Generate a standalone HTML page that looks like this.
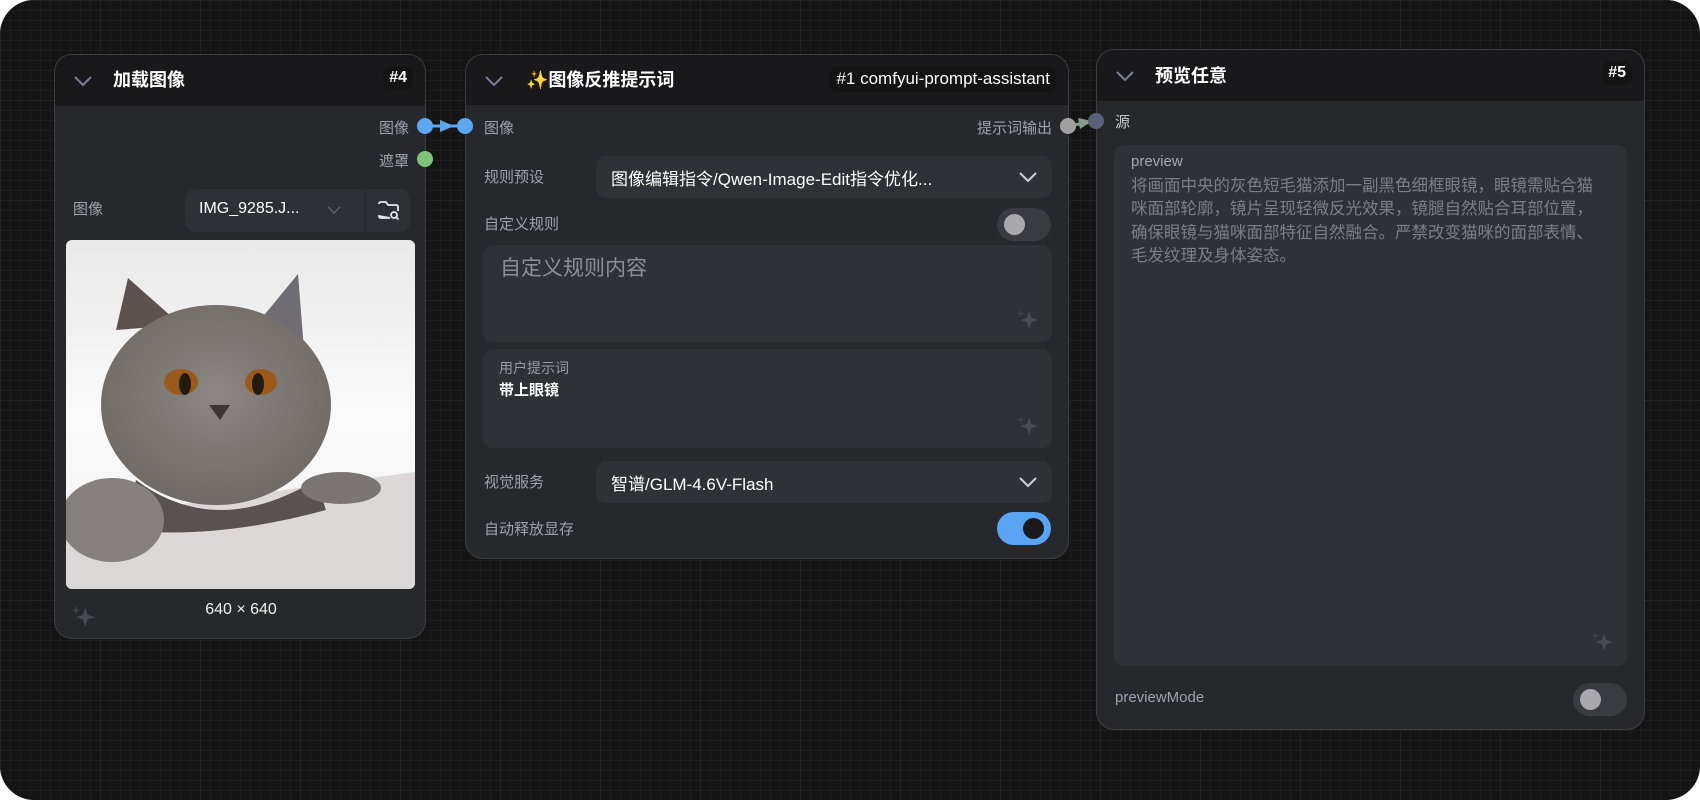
<!DOCTYPE html>
<html><head><meta charset="utf-8"><style>
*{box-sizing:border-box;margin:0;padding:0}
body{width:1700px;height:800px;background:#fff;overflow:hidden;font-family:"Liberation Sans","Noto Sans CJK SC",sans-serif;position:relative}
.canvas{position:absolute;left:0;top:0;width:1700px;height:800px;border-radius:34px;background-color:#141414;
background-image:linear-gradient(#1d1d1d 1px,transparent 1px),linear-gradient(90deg,#1d1d1d 1px,transparent 1px);background-size:10px 10px}
.canvas:after{content:"";position:absolute;inset:0;border-radius:34px;background-image:linear-gradient(#222 1px,transparent 1px),linear-gradient(90deg,#222 1px,transparent 1px);background-size:100px 100px}
.node{position:absolute;background:#27282c;border:1px solid #3c3d42;border-radius:18px;overflow:hidden;z-index:2}
.hd{position:absolute;left:0;top:0;right:0;background:#19191b;color:#fff;font-weight:bold;font-size:18px}
.hd .t{position:absolute;top:11px}
.hd .id{position:absolute;right:12px;top:11px;background:#141415;border-radius:8px;padding:3px 6px;font-size:16px}
.chev{position:absolute;left:18px;top:20px}
.a{position:absolute;white-space:nowrap}
.lbl{color:#9fa1ad;font-size:15px}
.dot{position:absolute;width:16px;height:16px;border-radius:50%;z-index:5}
.box{position:absolute;background:#303136;border-radius:10px}
.tog{position:absolute;width:54px;height:33px;border-radius:17px;background:#3a3b40}
.tog i{position:absolute;width:21px;height:21px;border-radius:50%;top:6px;left:7px;background:#a9a9ad}
.tog.on{background:#5aa5f3}.tog.on i{left:auto;right:7px;background:#1a1a1c}
</style></head><body>
<div class="canvas"></div>

<svg style="position:absolute;left:0;top:0;z-index:4" width="1700" height="800">
<line x1="425" y1="126" x2="465" y2="126" stroke="#5ba8f0" stroke-width="3"/>
<polygon points="440,120 454,126 440,132" fill="#5ba8f0"/>
<line x1="1068" y1="126" x2="1096" y2="121" stroke="#8a9a88" stroke-width="3"/>
<polygon points="1078,118 1092,121 1080,129" fill="#8a9a88"/>
</svg>

<!-- Node 1 -->
<div class="node" style="left:54px;top:54px;width:372px;height:585px">
 <div class="hd" style="height:51px">
  <svg class="chev" width="20" height="12"><path d="M2 2 L10 10 L18 2" stroke="#7a7f96" stroke-width="2" fill="none"/></svg>
  <div class="t" style="left:58px">加载图像</div>
  <div class="id">#4</div>
 </div>
 <div class="a lbl" style="right:16px;top:62px">图像</div>
 <div class="a lbl" style="right:16px;top:95px">遮罩</div>
 <div class="a lbl" style="left:18px;top:143px">图像</div>
 <div class="box" style="left:130px;top:134px;width:225px;height:43px;background:#2f3035">
  <div class="a" style="left:14px;top:11px;color:#fff;font-size:16px">IMG_9285.J...</div>
  <svg class="a" style="left:142px;top:17px" width="14" height="9"><path d="M1 1 L7 7 L13 1" stroke="#5f6068" stroke-width="1.5" fill="none"/></svg>
  <div class="a" style="left:180px;top:0;width:1px;height:43px;background:#26272b"></div>
  <svg class="a" style="left:192px;top:11px" width="24" height="22" viewBox="0 0 24 22"><path d="M2 4 Q2 2 4 2 H9 L11 5 H19 Q21 5 21 7 V11 M13 18 H4 Q2 18 2 16 Z" stroke="#e8e8ea" stroke-width="1.8" fill="none"/><circle cx="17" cy="15" r="3" stroke="#e8e8ea" stroke-width="1.8" fill="none"/><path d="M19 17 L21.5 19.5" stroke="#e8e8ea" stroke-width="1.8"/></svg>
 </div>
 <svg class="a" style="left:11px;top:185px;border-radius:6px" width="349" height="349" viewBox="0 0 349 349">
  <defs><linearGradient id="bg" x1="0" y1="0" x2="0" y2="1"><stop offset="0" stop-color="#e8e8e8"/><stop offset="0.5" stop-color="#fafafa"/><stop offset="1" stop-color="#f2f2f2"/></linearGradient>
  <radialGradient id="fur" cx="0.5" cy="0.45" r="0.6"><stop offset="0" stop-color="#8c8784"/><stop offset="1" stop-color="#6e6864"/></radialGradient></defs>
  <rect width="349" height="349" fill="url(#bg)"/>
  <polygon points="0,280 349,232 349,349 0,349" fill="#dcd8d8"/>
  <path d="M50 90 L62 38 L115 85 Z" fill="#5e5250"/>
  <path d="M190 85 L232 34 L238 110 Z" fill="#6f6c74"/>
  <ellipse cx="150" cy="165" rx="115" ry="100" fill="url(#fur)"/>
  <path d="M70 240 Q150 300 250 240 L260 270 Q150 300 60 290 Z" fill="#5a5250"/>
  <ellipse cx="46" cy="280" rx="52" ry="42" fill="#85807d"/>
  <ellipse cx="275" cy="248" rx="40" ry="16" fill="#7b7673"/>
  <ellipse cx="115" cy="142" rx="17" ry="13" fill="#9a5a18"/><ellipse cx="119" cy="144" rx="6" ry="11" fill="#241a14"/>
  <ellipse cx="195" cy="142" rx="16" ry="13" fill="#9a5a18"/><ellipse cx="192" cy="144" rx="6" ry="11" fill="#241a14"/>
  <path d="M143 165 L164 165 L154 180 Z" fill="#3e3433"/>
 </svg>
 <svg class="a" style="left:14px;top:547px" width="28" height="28" viewBox="0 0 24 24"><path d="M14 5 L16 11 L22 13 L16 15 L14 21 L12 15 L6 13 L12 11 Z" fill="#4a4b50"/><path d="M6 3 L7 6 L10 7 L7 8 L6 11 L5 8 L2 7 L5 6 Z" fill="#3e3f44"/></svg>
 <div class="a" style="left:0;width:372px;text-align:center;top:546px;color:#f0f0f0;font-size:16px">640 × 640</div>
</div>
<div class="dot" style="left:417px;top:118px;background:#5ba8f0"></div>
<div class="dot" style="left:417px;top:151px;background:#7cc47c"></div>

<!-- Node 2 -->
<div class="node" style="left:465px;top:54px;width:604px;height:505px">
 <div class="hd" style="height:50px">
  <svg class="chev" width="20" height="12"><path d="M2 2 L10 10 L18 2" stroke="#7a7f96" stroke-width="2" fill="none"/></svg>
  <div class="t" style="left:60px">✨图像反推提示词</div>
  <div class="id" style="font-weight:normal;font-size:17px">#1 comfyui-prompt-assistant</div>
 </div>
 <div class="a lbl" style="left:18px;top:62px">图像</div>
 <div class="a lbl" style="right:16px;top:62px">提示词输出</div>
 <div class="a lbl" style="left:18px;top:111px">规则预设</div>
 <div class="box" style="left:130px;top:101px;width:456px;height:42px">
  <div class="a" style="left:15px;top:9px;color:#fff;font-size:17px">图像编辑指令/Qwen-Image-Edit指令优化...</div>
  <svg class="a" style="right:14px;top:15px" width="20" height="12"><path d="M2 2 L10 10 L18 2" stroke="#d0d0d4" stroke-width="2" fill="none"/></svg>
 </div>
 <div class="a lbl" style="left:18px;top:158px">自定义规则</div>
 <div class="tog" style="left:531px;top:153px"><i></i></div>
 <div class="box" style="left:17px;top:190px;width:569px;height:97px">
  <div class="a" style="left:17px;top:7px;color:#8d8e94;font-size:21px">自定义规则内容</div>
  <svg class="a" style="right:12px;bottom:10px" width="26" height="26" viewBox="0 0 24 24"><path d="M14 5 L16 11 L22 13 L16 15 L14 21 L12 15 L6 13 L12 11 Z" fill="#4a4b50"/><path d="M6 3 L7 6 L10 7 L7 8 L6 11 L5 8 L2 7 L5 6 Z" fill="#3e3f44"/></svg>
 </div>
 <div class="box" style="left:17px;top:294px;width:569px;height:99px">
  <div class="a" style="left:16px;top:9px;color:#9a9ba3;font-size:14px">用户提示词</div>
  <div class="a" style="left:16px;top:30px;color:#fff;font-size:15px;font-weight:bold">带上眼镜</div>
  <svg class="a" style="right:12px;bottom:10px" width="26" height="26" viewBox="0 0 24 24"><path d="M14 5 L16 11 L22 13 L16 15 L14 21 L12 15 L6 13 L12 11 Z" fill="#4a4b50"/><path d="M6 3 L7 6 L10 7 L7 8 L6 11 L5 8 L2 7 L5 6 Z" fill="#3e3f44"/></svg>
 </div>
 <div class="a lbl" style="left:18px;top:416px">视觉服务</div>
 <div class="box" style="left:130px;top:406px;width:456px;height:42px">
  <div class="a" style="left:15px;top:9px;color:#fff;font-size:17px">智谱/GLM-4.6V-Flash</div>
  <svg class="a" style="right:14px;top:15px" width="20" height="12"><path d="M2 2 L10 10 L18 2" stroke="#d0d0d4" stroke-width="2" fill="none"/></svg>
 </div>
 <div class="a lbl" style="left:18px;top:463px">自动释放显存</div>
 <div class="tog on" style="left:531px;top:457px"><i></i></div>
</div>
<div class="dot" style="left:457px;top:118px;background:#5ba8f0"></div>
<div class="dot" style="left:1060px;top:118px;background:#a0a0a0"></div>

<!-- Node 3 -->
<div class="node" style="left:1096px;top:49px;width:549px;height:681px">
 <div class="hd" style="height:51px">
  <svg class="chev" width="20" height="12" style="top:20px"><path d="M2 2 L10 10 L18 2" stroke="#7a7f96" stroke-width="2" fill="none"/></svg>
  <div class="t" style="left:58px;top:12px">预览任意</div>
  <div class="id">#5</div>
 </div>
 <div class="a lbl" style="left:18px;top:61px;color:#c8c9d0">源</div>
 <div class="box" style="left:17px;top:95px;width:513px;height:521px">
  <div class="a" style="left:17px;top:8px;color:#a6a7ad;font-size:15px">preview</div>
  <div class="a" style="left:17px;top:30px;width:472px;white-space:normal;color:#7d7e84;font-size:16.5px;line-height:23.3px">将画面中央的灰色短毛猫添加一副黑色细框眼镜，眼镜需贴合猫咪面部轮廓，镜片呈现轻微反光效果，镜腿自然贴合耳部位置，确保眼镜与猫咪面部特征自然融合。严禁改变猫咪的面部表情、毛发纹理及身体姿态。</div>
  <svg class="a" style="right:12px;bottom:12px" width="26" height="26" viewBox="0 0 24 24"><path d="M14 5 L16 11 L22 13 L16 15 L14 21 L12 15 L6 13 L12 11 Z" fill="#4a4b50"/><path d="M6 3 L7 6 L10 7 L7 8 L6 11 L5 8 L2 7 L5 6 Z" fill="#3e3f44"/></svg>
 </div>
 <div class="a lbl" style="left:18px;top:639px">previewMode</div>
 <div class="tog" style="left:476px;top:633px"><i></i></div>
</div>
<div class="dot" style="left:1088px;top:113px;background:#5a5f7a"></div>
</body></html>
